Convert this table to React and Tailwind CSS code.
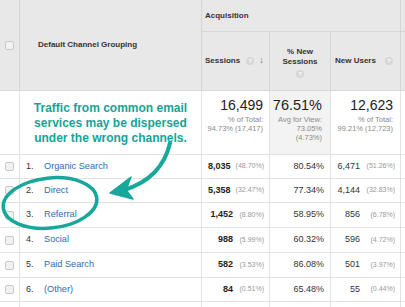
import React from "react";

const rows = [
  { n: "1.", name: "Organic Search", s: "8,035", sp: "(48.70%)", ns: "80.54%", nu: "6,471", nup: "(51.26%)", h: "h-[24px]" },
  { n: "2.", name: "Direct", s: "5,358", sp: "(32.47%)", ns: "77.34%", nu: "4,144", nup: "(32.83%)", h: "h-[24px]" },
  { n: "3.", name: "Referral", s: "1,452", sp: "(8.80%)", ns: "58.95%", nu: "856", nup: "(6.78%)", h: "h-[25px]" },
  { n: "4.", name: "Social", s: "988", sp: "(5.99%)", ns: "60.32%", nu: "596", nup: "(4.72%)", h: "h-[25px]" },
  { n: "5.", name: "Paid Search", s: "582", sp: "(3.53%)", ns: "86.08%", nu: "501", nup: "(3.97%)", h: "h-[25px]" },
  { n: "6.", name: "(Other)", s: "84", sp: "(0.51%)", ns: "65.48%", nu: "55", nup: "(0.44%)", h: "h-[24px]" },
];

function Q() {
  return (
    <span className="inline-flex h-[8px] w-[8px] items-center justify-center rounded-full bg-[#d6d6d6] text-[6px] font-bold leading-none text-white">
      ?
    </span>
  );
}

function Box() {
  return <span className="block h-[9px] w-[9px] rounded-[2px] border border-[#c8c8c8] bg-[#f2f2f2]" />;
}

const cols = "grid grid-cols-[20px_181px_68px_61px_70px_1fr]";

export default function App() {
  return (
    <div
      className="relative h-[307px] w-[405px] overflow-hidden bg-white text-[#333]"
      style={{ fontFamily: '"Liberation Sans", Arial, sans-serif' }}
    >
      {/* header */}
      <div className={`${cols} grid-rows-[32px_58px] border-b border-[#d9d9d9] bg-[#e8e8e8]`}>
        <div className="row-span-2 flex items-center justify-center border-r border-[#d6d6d6]">
          <Box />
        </div>
        <div className="row-span-2 flex items-center pl-[18px] text-[8px] font-bold">Default Channel Grouping</div>
        <div className="col-span-3 flex items-center border-b border-l border-[#d6d6d6] pl-[3px] text-[8px] font-bold">
          Acquisition
        </div>
        <div className="border-b border-l border-[#d6d6d6]" />
        <div className="flex items-center border-l border-[#d6d6d6] pl-[3px] text-[8px] font-bold">
          <span>Sessions</span>
          <span className="ml-[6px]"><Q /></span>
          <span className="ml-[5px] text-[9px] font-normal text-[#666]">↓</span>
        </div>
        <div className="flex flex-col items-center justify-center border-l border-[#d6d6d6] pt-[4px] text-center text-[8px] font-bold leading-[10px]">
          <span>% New</span>
          <span>Sessions</span>
          <span className="mt-[2px]"><Q /></span>
        </div>
        <div className="flex items-center border-l border-[#d6d6d6] pl-[4px] text-[8px] font-bold">
          <span>New Users</span>
          <span className="ml-[9px]"><Q /></span>
        </div>
        <div className="border-l border-[#d6d6d6]" />
      </div>

      {/* summary */}
      <div className={`${cols} h-[64px] border-b border-[#e2e2e2]`}>
        <div className="border-r border-[#e2e2e2]" />
        <div className="flex flex-col items-center justify-center pt-[1px] text-center text-[12px] font-bold leading-[15px] text-[#14a497]">
          <span>Traffic from common email</span>
          <span>services may be dispersed</span>
          <span>under the wrong channels.</span>
        </div>
        <div className="flex flex-col items-end border-l border-[#e2e2e2] pr-[6px] pt-[6px]">
          <span className="text-[14px] leading-[16px] text-[#222]">16,499</span>
          <span className="mt-[2px] text-[7.5px] leading-[9px] text-[#8a8a8a]">% of Total:</span>
          <span className="text-[7.5px] leading-[9px] text-[#8a8a8a]">94.73% (17,417)</span>
        </div>
        <div className="flex flex-col items-end border-l border-[#e2e2e2] bg-[#f3f3f3] pr-[8px] pt-[6px]">
          <span className="text-[14.5px] leading-[16px] text-[#222]">76.51%</span>
          <span className="mt-[2px] text-[7.5px] leading-[9px] text-[#8a8a8a]">Avg for View:</span>
          <span className="text-[7.5px] leading-[9px] text-[#8a8a8a]">73.05%</span>
          <span className="text-[7.5px] leading-[9px] text-[#8a8a8a]">(4.73%)</span>
        </div>
        <div className="flex flex-col items-end border-l border-[#e2e2e2] pr-[7px] pt-[6px]">
          <span className="text-[14px] leading-[16px] text-[#222]">12,623</span>
          <span className="mt-[2px] text-[7.5px] leading-[9px] text-[#8a8a8a]">% of Total:</span>
          <span className="text-[7.5px] leading-[9px] text-[#8a8a8a]">99.21% (12,723)</span>
        </div>
        <div className="border-l border-[#e2e2e2]" />
      </div>

      {/* data rows */}
      {rows.map((r) => (
        <div key={r.n} className={`${cols} ${r.h} border-b border-[#e2e2e2] text-[9px]`}>
          <div className="flex items-center justify-center border-r border-[#e2e2e2]">
            <Box />
          </div>
          <div className="flex items-center pl-[6px]">
            <span className="w-[18px] text-[#333]">{r.n}</span>
            <span className="text-[9.2px] text-[#2f6db0]">{r.name}</span>
          </div>
          <div className="flex items-center justify-end gap-[5px] border-l border-[#e2e2e2] pr-[5px]">
            <span className="font-bold text-[#222]">{r.s}</span>
            <span className="min-w-[26px] text-right text-[7px] text-[#999]">{r.sp}</span>
          </div>
          <div className="flex items-center justify-end border-l border-[#e2e2e2] pr-[6px] text-[#333]">{r.ns}</div>
          <div className="flex items-center justify-end gap-[5px] border-l border-[#e2e2e2] pr-[5px]">
            <span className="text-[#333]">{r.nu}</span>
            <span className="min-w-[30px] text-right text-[7px] text-[#999]">{r.nup}</span>
          </div>
          <div className="border-l border-[#e2e2e2]" />
        </div>
      ))}
      <div className={`${cols} h-[10px]`}>
        <div className="border-r border-[#e2e2e2]" />
        <div />
        <div className="border-l border-[#e2e2e2]" />
        <div className="border-l border-[#e2e2e2]" />
        <div className="border-l border-[#e2e2e2]" />
        <div className="border-l border-[#e2e2e2]" />
      </div>

      {/* annotation overlay */}
      <svg className="pointer-events-none absolute left-0 top-0" width="405" height="307" viewBox="0 0 405 307">
        <ellipse cx="50" cy="203" rx="47" ry="25" fill="none" stroke="#17a89b" strokeWidth="3.5" transform="rotate(-6 50 203)" />
        <path d="M170 143 C 165 165, 150 182, 124 190" fill="none" stroke="#17a89b" strokeWidth="4" strokeLinecap="round" />
        <path d="M110 193 L131 177 L126 190 L133 199 Z" fill="#17a89b" stroke="#17a89b" strokeWidth="1.5" strokeLinejoin="round" />
      </svg>
    </div>
  );
}
